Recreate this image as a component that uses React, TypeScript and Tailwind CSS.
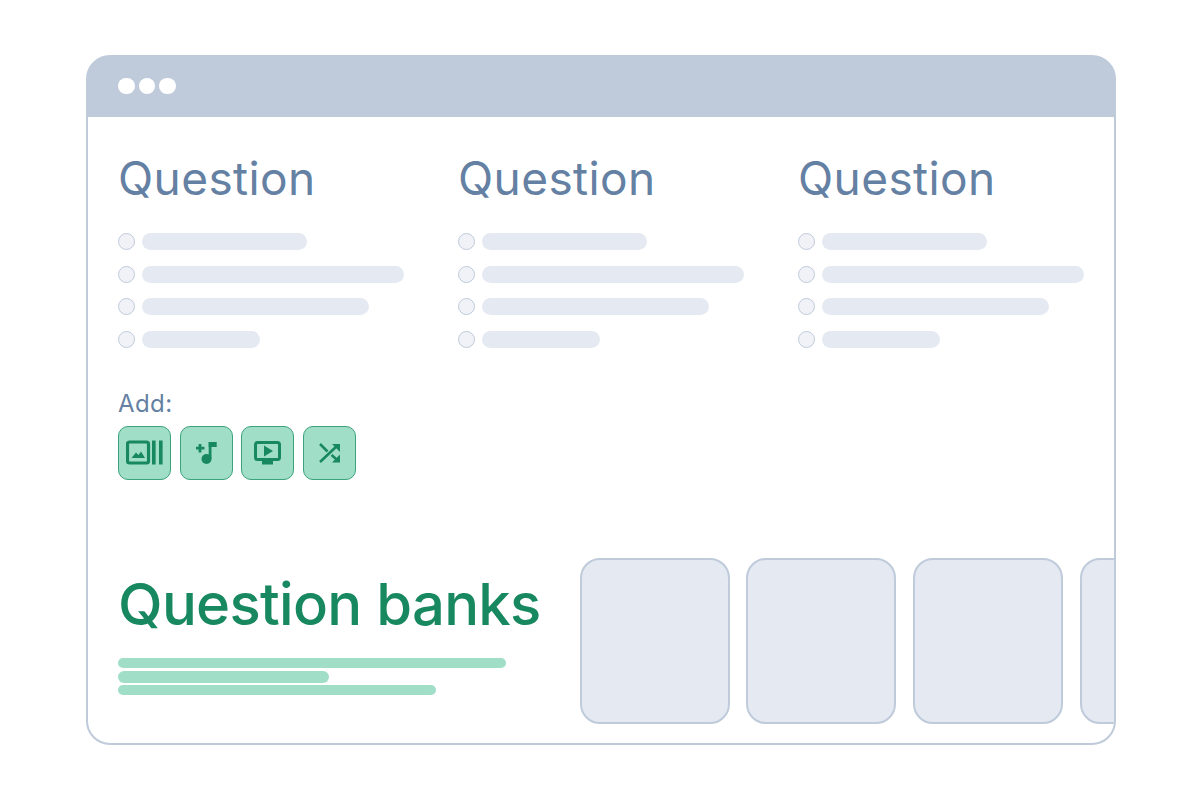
const rows = ["w-[165px]", "w-[262px]", "w-[227px]", "w-[118px]"];

function QuestionCol() {
  return (
    <div className="w-[340px] shrink-0">
      <div className="h-[52px] text-[46px] leading-[52px] text-[#6480a3] tracking-[0.4px]">Question</div>
      <div className="mt-[29px] flex flex-col gap-[15.5px]">
        {rows.map((w) => (
          <div key={w} className="flex h-[17px] items-center gap-[6.5px]">
            <div className="h-[17px] w-[17px] shrink-0 rounded-full border border-[#bfcbdb] bg-[#f0f2f7]" />
            <div className={`h-[17px] rounded-full bg-[#e5e9f1] ${w}`} />
          </div>
        ))}
      </div>
    </div>
  );
}

const G = "#17885f";

function IconGallery() {
  return (
    <svg width="37" height="25" viewBox="0 0 37 25" fill="none">
      <rect x="1.5" y="2" width="21" height="21" rx="2" stroke={G} strokeWidth="3.2" />
      <path d="M5.5 18 L10 12.5 L12.5 15 L15 11.5 L19 18 Z" fill={G} />
      <rect x="26" y="0.5" width="3.6" height="24" fill={G} />
      <rect x="33" y="0.5" width="3.6" height="24" fill={G} />
    </svg>
  );
}
function IconMusic() {
  return (
    <svg width="21" height="23" viewBox="0 0 21 23" fill="none">
      <path d="M4 3v8.5M0 7.2h8.5" stroke={G} strokeWidth="2.8" />
      <circle cx="10.5" cy="18" r="5" fill={G} />
      <rect x="12.7" y="1" width="2.8" height="17" fill={G} />
      <rect x="12.7" y="1" width="8" height="5" fill={G} />
    </svg>
  );
}
function IconPlay() {
  return (
    <svg width="27" height="24" viewBox="0 0 27 24" fill="none">
      <rect x="1.5" y="1.5" width="24" height="17" rx="2" stroke={G} strokeWidth="3" />
      <path d="M10 4.5 L19 10 L10 15.5 Z" fill={G} />
      <rect x="8" y="19" width="11" height="4.5" fill={G} />
    </svg>
  );
}
function IconShuffle() {
  return (
    <svg width="22" height="20" viewBox="0 0 22 20" fill="none">
      <path d="M1 1 L8.5 8.5 M1 19 L19 2 M12.5 12 L19.5 18" stroke={G} strokeWidth="2.6" />
      <path d="M13 1 H21 V9 Z M21 19.5 H13 L21 11.5 Z" fill={G} />
    </svg>
  );
}

function AddBtn({ children }: { children: React.ReactNode }) {
  return (
    <div className="flex h-[54px] w-[53px] items-center justify-center rounded-[10px] border border-[#3aa27c] bg-[#a0dec7]">
      {children}
    </div>
  );
}

function Card() {
  return <div className="h-[166px] w-[150px] shrink-0 rounded-[20px] border-2 border-[#bfcbdb] bg-[#e5e9f1]" />;
}

export default function App() {
  return (
    <div
      className="h-[800px] w-[1200px] overflow-hidden bg-white pl-[86px] pt-[55px]"
      style={{ fontFamily: "Inter, 'Noto Sans', sans-serif" }}
    >
      <div className="h-[690px] w-[1030px] overflow-hidden rounded-[24px] border-2 border-[#bfcbda] bg-[#bfcbda]">
        <div className="flex h-[60px] items-center gap-[4px] pb-[2px] pl-[30px]">
          <div className="h-[16.5px] w-[16.5px] rounded-full bg-white" />
          <div className="h-[16.5px] w-[16.5px] rounded-full bg-white" />
          <div className="h-[16.5px] w-[16.5px] rounded-full bg-white" />
        </div>
        <div className="h-[626px] bg-white pl-[30px] pt-[35px]">
          <div className="flex">
            <QuestionCol />
            <QuestionCol />
            <QuestionCol />
          </div>
          <div className="mt-[44px] h-[24px] text-[24px] leading-[24px] tracking-[0.4px] text-[#6480a3]">Add:</div>
          <div className="mt-[10px] flex gap-[8.7px]">
            <AddBtn><IconGallery /></AddBtn>
            <AddBtn><IconMusic /></AddBtn>
            <AddBtn><IconPlay /></AddBtn>
            <AddBtn><IconShuffle /></AddBtn>
          </div>
          <div className="mt-[78px] flex">
            <div className="w-[461.5px] shrink-0">
              <div className="mt-[10px] h-[72px] text-[58px] font-medium leading-[72px] tracking-[-0.7px] whitespace-nowrap text-[#17885f]">Question banks</div>
              <div className="mt-[18px] flex flex-col">
                <div className="h-[10px] w-[388px] rounded-full bg-[#a0dec7]" />
                <div className="mt-[3px] h-[12px] w-[211px] rounded-full bg-[#a0dec7]" />
                <div className="mt-[2px] h-[10px] w-[318px] rounded-full bg-[#a0dec7]" />
              </div>
            </div>
            <div className="flex gap-[16.7px]">
              <Card />
              <Card />
              <Card />
              <Card />
            </div>
          </div>
        </div>
      </div>
    </div>
  );
}
